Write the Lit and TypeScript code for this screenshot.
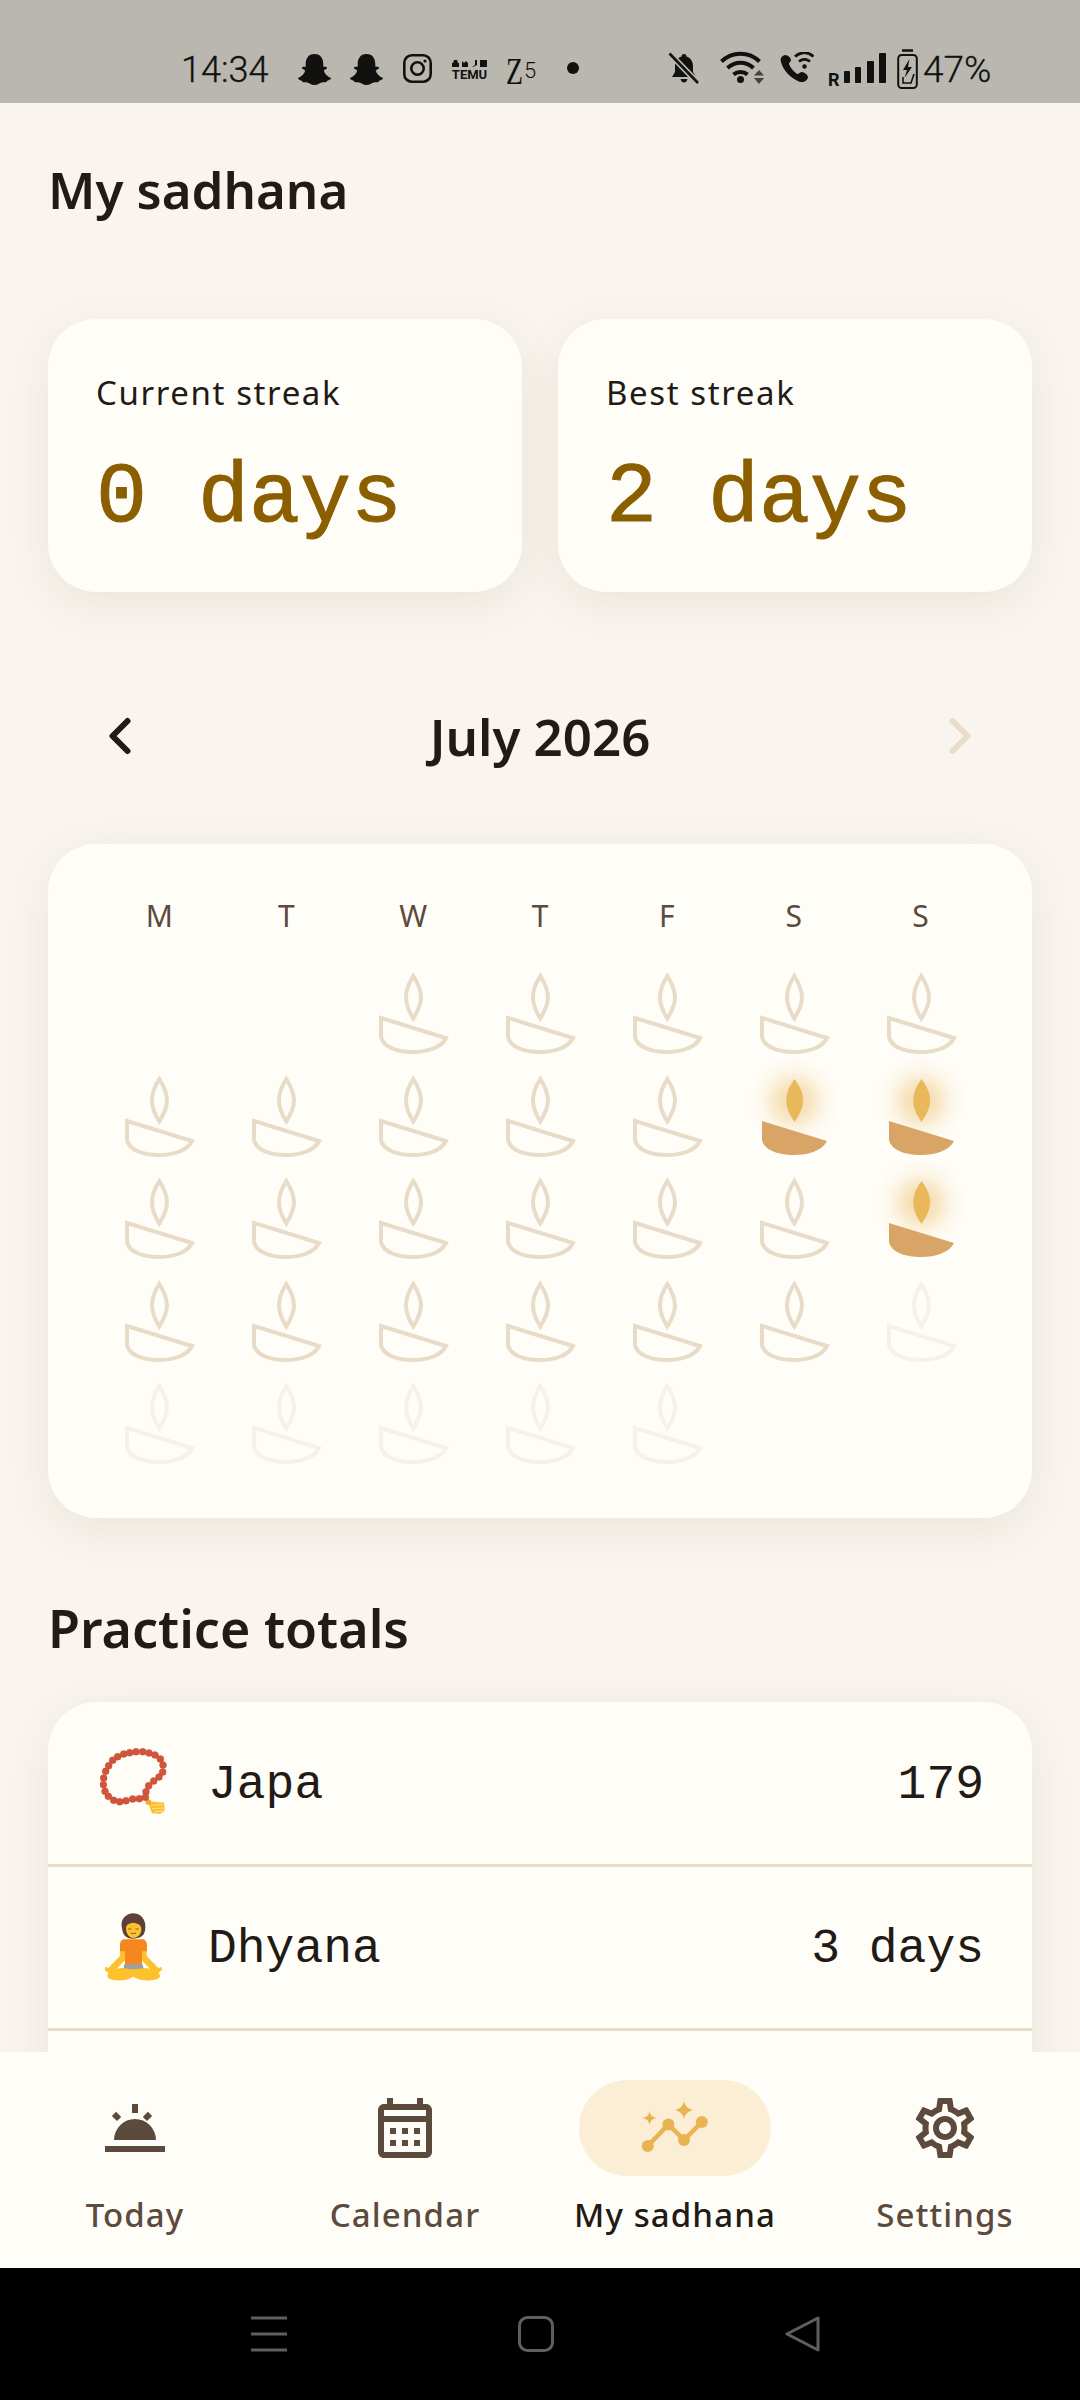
import { LitElement, html, css, svg } from "lit";
import { customElement } from "lit/decorators.js";

const FLAME = "M38.3 4C33.5 11.5 31 18 31 25.5C31 33 34 39.5 38.3 46.5C42.6 39.5 46 33 46 25.5C46 18 43 11.5 38.3 4Z";
const FLAME_LIT = "M38.5 4C33 11.5 30.3 18 30.3 25.5C30.3 33 33.5 39.5 38.5 47C43.5 39.5 47 33 47 25.5C47 18 44 11.5 38.5 4Z";
const BOWL = "M6 46L71 66C66 76 52 80 38 80C22 80 8 75 6 65Z";

type L = 0 | 1 | 2 | 3; // blank, outline, lit, faded
const ROWS: L[][] = [
  [0, 0, 1, 1, 1, 1, 1],
  [1, 1, 1, 1, 1, 2, 2],
  [1, 1, 1, 1, 1, 1, 2],
  [1, 1, 1, 1, 1, 1, 3],
  [3, 3, 3, 3, 3, 0, 0],
];

const BEADS = [[131,240],[137,220],[146,203],[158,187],[173,176],[191,168],[209,164],[228,161],[248,161],[267,165],[285,171],[301,183],[309,201],[308,222],[297,237],[281,249],[266,263],[258,281],[256,298],[238,302],[218,303],[198,308],[179,311],[161,307],[145,295],[135,280],[130,260]];

@customElement("app-root")
export class AppRoot extends LitElement {
  static styles = css`
    :host { display: block; width: 1080px; height: 2400px; overflow: hidden; background: #f9f5ee; font-family: "Noto Sans", sans-serif; color: #211a15; }
    .screen { display: flex; flex-direction: column; height: 2400px; }
    .status { height: 103px; flex: none; background: #bab7b0; display: flex; align-items: flex-start; padding-left: 181px; color: #11110f; box-sizing: border-box; }
    .status > * { flex: none; }
    .time { font: 300 36px/1 Roboto, sans-serif; margin-top: 52px; width: 87px; -webkit-text-stroke: 0.3px #11110f; }
    .ghost1 { margin: 54px 0 0 30px; }
    .ghost2 { margin: 54px 0 0 19px; }
    .insta { margin: 54px 0 0 20px; }
    .temu { margin: 60px 0 0 20px; width: 35px; display: flex; flex-direction: column; align-items: center; }
    .temu b { font: 700 13px/1 Roboto, sans-serif; margin-top: 1px; }
    .z5 { margin: 53px 0 0 19px; width: 31px; display: flex; align-items: flex-start; }
    .z5 span { font: 400 37px/1 "Liberation Serif", serif; display: block; width: 17px; transform: scaleX(0.75); transform-origin: left top; }
    .z5 small { font: 300 22px/1 Roboto, sans-serif; margin-top: 7px; margin-left: 1px; }
    .dot { margin: 62px 0 0 30px; width: 12px; height: 12px; border-radius: 50%; background: #11110f; }
    .bell { margin: 52px 0 0 89px; }
    .wifi { margin: 51px 0 0 20px; }
    .call { margin: 52px 0 0 15px; }
    .r { margin: 71px 0 0 14px; font: 700 18px/1 Roboto, sans-serif; width: 12px; }
    .bars { margin: 53px 0 0 4px; }
    .batt { margin: 49px 0 0 11px; }
    .pct { font: 300 37px/1 Roboto, sans-serif; margin: 51px 0 0 5px; -webkit-text-stroke: 0.3px #11110f; }

    .main { flex: 1; min-height: 0; overflow: hidden; padding: 52px 48px 0 48px; }
    h1 { margin: 0; font: 600 51px/68px "Noto Sans", sans-serif; }
    .streaks { display: grid; grid-template-columns: 1fr 1fr; gap: 36px; margin-top: 96px; }
    .card { background: #fffdf8; border-radius: 48px; box-shadow: 0 12px 48px rgba(90, 70, 40, 0.09); }
    .streak { height: 273px; padding: 52px 48px 0; box-sizing: border-box; }
    .streak .lbl { font: 400 33px/44px "Noto Sans", sans-serif; letter-spacing: 1.6px; }
    .streak .val { font: 400 85px/100px "Liberation Mono", monospace; color: #8b5e00; margin-top: 34px; white-space: pre; -webkit-text-stroke: 1px #8b5e00; }
    .month { display: flex; align-items: center; justify-content: space-between; padding: 0 36px; height: 72px; margin-top: 108px; }
    .month span { font: 600 51px/68px "Noto Sans", sans-serif; }
    .month svg { width: 72px; height: 72px; display: block; fill: none; stroke-width: 2; stroke-linecap: round; stroke-linejoin: round; }
    .prev { stroke: #211a15; }
    .next { stroke: #e8dcc8; }
    .cal { margin-top: 72px; padding: 50px 48px 48px; }
    .grid { display: grid; grid-template-columns: repeat(7, 1fr); }
    .hd { font: 400 30px/44px "Noto Sans", sans-serif; text-align: center; color: #5c4a3d; }
    .weeks { display: grid; grid-template-columns: repeat(7, 1fr); grid-auto-rows: 88px; row-gap: 14.5px; margin-top: 34px; }
    .cell { display: flex; justify-content: center; position: relative; }
    .lamp { width: 76px; height: 88px; display: block; position: relative; fill: none; stroke: #e8dcc8; stroke-width: 4; }
    .faded { opacity: 0.32; }
    .lit { stroke: none; }
    .lit .flame { fill: #e8b85a; }
    .lit .bowl { fill: #d9a566; }
    .glow { position: absolute; left: 50%; top: -20px; width: 92px; height: 92px; margin-left: -46px; border-radius: 50%; background: radial-gradient(circle closest-side, rgba(232, 184, 90, 0.55) 0%, rgba(232, 184, 90, 0.34) 35%, rgba(232, 184, 90, 0.08) 70%, rgba(232, 184, 90, 0) 100%); }
    h2 { margin: 76px 0 0; font: 600 52px/68px "Noto Sans", sans-serif; }
    .list { margin-top: 40px; border-radius: 48px 48px 0 0; }
    .row { height: 164.5px; box-sizing: border-box; border-bottom: 3px solid #e8dcc8; display: flex; align-items: center; padding: 0 48px 0 52px; }
    .row svg { width: 70px; height: 70px; flex: none; display: block; }
    .row .name { font: 400 48px/1 "Liberation Mono", monospace; margin: 4px 0 0 38px; flex: 1; }
    .row .num { font: 400 48px/1 "Liberation Mono", monospace; margin-top: 4px; white-space: pre; }
    .row.tail { height: 200px; border: 0; }

    .nav { height: 216px; flex: none; background: #fffdf8; display: grid; grid-template-columns: repeat(4, 270px); position: relative; }
    .tab { display: flex; flex-direction: column; align-items: center; padding-top: 28px; color: #5c4a3d; }
    .pill { width: 192px; height: 96px; border-radius: 48px; display: flex; align-items: center; justify-content: center; }
    .pill svg { width: 72px; height: 72px; display: block; fill: currentColor; }
    .tab.on .pill { background: #fbeed5; }
    .tab.on { color: #211a15; }
    .tab .t { font: 500 33px/44px "Noto Sans", sans-serif; letter-spacing: 1.1px; margin-top: 17px; }
    .sys { height: 132px; flex: none; background: #000; display: flex; align-items: center; position: relative; padding-left: 251px; box-sizing: border-box; }
    .sys svg { display: block; fill: none; stroke: #5f5f5f; stroke-width: 3; stroke-linejoin: round; }
    .sys .h { margin-left: 231px; }
    .sys .b { margin-left: 230px; }
  `;

  private ghost(cls: string) {
    return html`<svg class=${cls} width="33" height="31" viewBox="0 0 33 31" fill="#11110f"><path d="M16.5 0C23 0 25.3 5 25.3 10V12.6C26.6 13.2 28.4 12 29 13.4C29.4 15 26.3 15.4 25.8 16.6C26.6 20 29.5 22.8 33 24C33 26 29.6 26 29 27.2C28.4 28.6 26.8 28 25 28.2C22 28.6 20 31 16.5 31C13 31 11 28.6 8 28.2C6.2 28 4.6 28.6 4 27.2C3.4 26 0 26 0 24C3.5 22.8 6.4 20 7.2 16.6C6.7 15.4 3.6 15 4 13.4C4.6 12 6.4 13.2 7.7 12.6V10C7.7 5 10 0 16.5 0Z"/></svg>`;
  }

  private lamp(s: L) {
    if (s === 0) return html`<div class="cell"></div>`;
    const lit = s === 2;
    return html`<div class="cell">
      ${lit ? html`<span class="glow"></span>` : ""}
      <svg class="lamp ${lit ? "lit" : ""} ${s === 3 ? "faded" : ""}" viewBox="0 0 76 88">
        <path class="flame" d=${lit ? FLAME_LIT : FLAME} /><path class="bowl" d=${BOWL} />
      </svg>
    </div>`;
  }

  private tab(label: string, icon: unknown, on = false) {
    return html`<div class="tab ${on ? "on" : ""}"><div class="pill">${icon}</div><div class="t">${label}</div></div>`;
  }

  render() {
    const today = html`<svg viewBox="0 0 24 24"><path d="M2 18h20v2H2zM5 16a7 7 0 0 1 14 0zM11 4h2v3h-2z"/><path d="M5.3 7.4l1.4-1.4 1.7 1.7-1.4 1.4zM17.3 6l1.4 1.4-1.7 1.7-1.4-1.4z" transform="translate(-1 .6)"/></svg>`;
    const cal = html`<svg viewBox="0 0 24 24"><path d="M19 4h-1V2h-2v2H8V2H6v2H5c-1.1 0-2 .9-2 2v14c0 1.1.9 2 2 2h14c1.1 0 2-.9 2-2V6c0-1.1-.9-2-2-2zm0 16H5V10h14v10zm0-12H5V6h14v2zM7 12h2v2H7zm4 0h2v2h-2zm4 0h2v2h-2zM7 16h2v2H7zm4 0h2v2h-2zm4 0h2v2h-2z"/></svg>`;
    const gear = html`<svg viewBox="0 0 24 24"><path d="M19.43 12.98c.04-.32.07-.64.07-.98 0-.34-.03-.66-.07-.98l2.11-1.65c.19-.15.24-.42.12-.64l-2-3.46c-.09-.16-.26-.25-.44-.25-.06 0-.12.01-.17.03l-2.49 1c-.52-.4-1.08-.73-1.69-.98l-.38-2.65C14.46 2.18 14.25 2 14 2h-4c-.25 0-.46.18-.49.42l-.38 2.65c-.61.25-1.17.59-1.69.98l-2.49-1c-.06-.02-.12-.03-.18-.03-.17 0-.34.09-.43.25l-2 3.46c-.13.22-.07.49.12.64l2.11 1.65c-.04.32-.07.65-.07.98 0 .33.03.66.07.98l-2.11 1.65c-.19.15-.24.42-.12.64l2 3.46c.09.16.26.25.44.25.06 0 .12-.01.17-.03l2.49-1c.52.4 1.08.73 1.69.98l.38 2.65c.03.24.24.42.49.42h4c.25 0 .46-.18.49-.42l.38-2.65c.61-.25 1.17-.59 1.69-.98l2.49 1c.06.02.12.03.18.03.17 0 .34-.09.43-.25l2-3.46c.12-.22.07-.49-.12-.64l-2.11-1.65zm-1.98-1.71c.04.31.05.52.05.73 0 .21-.02.43-.05.73l-.14 1.13.89.7 1.08.84-.7 1.21-1.27-.51-1.04-.42-.9.68c-.43.32-.84.56-1.25.73l-1.06.43-.16 1.13-.2 1.35h-1.4l-.19-1.35-.16-1.13-1.06-.43c-.43-.18-.83-.41-1.23-.71l-.91-.7-1.06.43-1.27.51-.7-1.21 1.08-.84.89-.7-.14-1.13c-.03-.31-.05-.54-.05-.74s.02-.43.05-.73l.14-1.13-.89-.7-1.08-.84.7-1.21 1.27.51 1.04.42.9-.68c.43-.32.84-.56 1.25-.73l1.06-.43.16-1.13.2-1.35h1.39l.19 1.35.16 1.13 1.06.43c.43.18.83.41 1.23.71l.91.7 1.06-.43 1.27-.51.7 1.21-1.07.85-.89.7.14 1.13zM12 8c-2.21 0-4 1.79-4 4s1.79 4 4 4 4-1.79 4-4-1.79-4-4-4zm0 6c-1.1 0-2-.9-2-2s.9-2 2-2 2 .9 2 2-.9 2-2 2z"/></svg>`;
    const graph = html`<svg viewBox="0 0 72 72" style="color:#e8b44f">
      <path d="M8.8 54L29.4 32.5L45 48L62.8 30" fill="none" stroke="currentColor" stroke-width="4.5"/>
      <circle cx="8.8" cy="54" r="6"/><circle cx="29.4" cy="32.5" r="6"/><circle cx="45" cy="48" r="6"/><circle cx="62.8" cy="30" r="6"/>
      <path d="M45 9Q46 16 54 18Q46 20 45 27Q44 20 36 18Q44 16 45 9Z"/>
      <path d="M10.5 19Q11 25 18 26Q11 27 10.5 33Q10 27 3 26Q10 25 10.5 19Z"/>
    </svg>`;

    return html`<div class="screen">
      <div class="status">
        <span class="time">14:34</span>
        ${this.ghost("ghost1")}${this.ghost("ghost2")}
        <svg class="insta" width="29" height="29" viewBox="0 0 29 29" fill="none" stroke="#11110f" stroke-width="2.6"><rect x="1.3" y="1.3" width="26.4" height="26.4" rx="7.5"/><circle cx="14.5" cy="14.5" r="6.2"/><circle cx="22" cy="7" r="1.6" fill="#11110f" stroke="none"/></svg>
        <div class="temu">
          <svg width="35" height="7" viewBox="0 0 35 7" fill="#11110f"><path d="M2 0H5L6 3H7V7H0V3H1ZM10 1L12 3L14 1L16 3V7H10ZM20 7L23 5V0H25V5L21 7ZM28 0H35V7H28Z"/></svg>
          <b>TEMU</b>
        </div>
        <div class="z5"><span>Z</span><small>5</small></div>
        <span class="dot"></span>
        <svg class="bell" width="32" height="32" viewBox="0 0 32 32"><path d="M16 2C17.5 2 18.5 3 18.5 4.5C23 6 25 10 25 14V20L28 25H4L7 20V14C7 10 9 6 13.5 4.5C13.5 3 14.5 2 16 2ZM12.5 27H19.5C19 29.5 17.5 30.5 16 30.5C14.5 30.5 13 29.5 12.5 27Z" fill="#11110f"/><path d="M1.5 1.5L30 31" stroke="#bab7b0" stroke-width="6"/><path d="M1.5 1.5L30 31" stroke="#11110f" stroke-width="2.6"/></svg>
        <svg class="wifi" width="45" height="33" viewBox="0 0 45 33" fill="none" stroke="#11110f" stroke-width="4"><path d="M1.5 10.5C12 0 29 0 39.5 10.5M7.5 17C15 10 26 10 33.5 17M13.5 23.5C17.5 20 23.5 20 27.5 23.5"/><circle cx="20.5" cy="28.5" r="3.5" fill="#11110f" stroke="none"/><path d="M34 24.5L39 19L44 24.5ZM34 27H44L39 33Z" fill="#11110f" stroke="none" opacity=".7"/></svg>
        <svg class="call" width="34" height="30" viewBox="0 0 34 30" fill="none" stroke="#11110f"><path d="M5 3C1 4 0 7 1 10C3 18 10 26 20 30C24 31 28 28 28 25C28 23 24 20 22 20C20 20 19 22 17 22C13 19 10 15 9 12C9 10 11 10 11 8C11 6 8 3 5 3Z" fill="#11110f" stroke="none"/><path d="M15 4.5C21 -0.5 28 -0.5 33.5 4.5M19 9.5C23 6.5 26 6.5 30 9.5" stroke-width="2.8"/><circle cx="24.5" cy="14.5" r="2.2" fill="#11110f" stroke="none"/></svg>
        <span class="r">R</span>
        <svg class="bars" width="42" height="30" viewBox="0 0 42 30" fill="#11110f"><rect x="0" y="18" width="6" height="12" rx=".8"/><rect x="11" y="14" width="6" height="16" rx=".8"/><rect x="23" y="8" width="7" height="22" rx=".8"/><rect x="35" y="0" width="7" height="30" rx=".8"/></svg>
        <svg class="batt" width="21" height="40" viewBox="0 0 21 40" fill="none" stroke="#11110f" stroke-width="2"><path d="M5 1.5H16" stroke-width="2.5"/><rect x="1.2" y="6" width="18.6" height="33" rx="3.5"/><path d="M12.5 10L6 21H10L7.5 29L15 18H11Z" fill="#11110f" stroke="none"/><path d="M6 28V34H14L17 25" stroke-width="1.6"/></svg>
        <span class="pct">47%</span>
      </div>

      <div class="main">
        <h1>My sadhana</h1>
        <div class="streaks">
          <div class="card streak"><div class="lbl">Current streak</div><div class="val">0 days</div></div>
          <div class="card streak"><div class="lbl">Best streak</div><div class="val">2 days</div></div>
        </div>
        <div class="month">
          <svg class="prev" viewBox="0 0 24 24"><path d="M14.5 7L9.5 12L14.5 17"/></svg>
          <span>July 2026</span>
          <svg class="next" viewBox="0 0 24 24"><path d="M9.5 7L14.5 12L9.5 17"/></svg>
        </div>
        <div class="card cal">
          <div class="grid">${["M","T","W","T","F","S","S"].map((d) => html`<div class="hd">${d}</div>`)}</div>
          <div class="weeks">${ROWS.flat().map((s) => this.lamp(s))}</div>
        </div>
        <h2>Practice totals</h2>
        <div class="card list">
          <div class="row">
            <svg viewBox="120 150 210 210">
              <path d="M262 310L312 314L314 338L300 348L276 346Z" fill="#fbc02d"/>
              <path d="M272 322L308 320M276 332L310 330M284 342L312 338" stroke="#fff3c4" stroke-width="2" fill="none"/>
              <circle cx="265" cy="312" r="8.5" fill="#f9a825"/>
              ${BEADS.map(([x, y]) => svg`<circle cx=${x} cy=${y} r="10.5" fill="#d2553b" stroke="#b5452f" stroke-width="1"/>`)}
            </svg>
            <span class="name">Japa</span><span class="num">179</span>
          </div>
          <div class="row">
            <svg viewBox="60 40 210 210">
              <path d="M120 140V172L85 208L76 204L74 214L86 224L108 212L138 182V150ZM200 140V172L235 208L244 204L246 214L234 224L212 212L182 182V150Z" fill="#fdc22b"/>
              <path d="M134 122H186C196 122 201 130 201 140V158H186V196H135V158H120V140C120 130 124 122 134 122Z" fill="#f7861e"/>
              <path d="M133 196H187L192 214H130Z" fill="#9e9e9e"/>
              <path d="M82 232C82 220 100 212 122 208L160 212L198 208C220 212 240 220 240 232C240 242 220 246 196 245C180 244 170 240 160 234C150 240 140 244 124 245C100 246 82 242 82 232Z" fill="#fdc22b"/>
              <path d="M126 88C120 66 134 46 158 44C182 44 198 62 196 88C194 110 186 118 160 120C136 120 128 108 126 88Z" fill="#5d4037"/>
              <path d="M138 88C138 78 146 74 160 72C174 74 184 78 184 92C184 108 172 118 160 118C148 118 138 106 138 88Z" fill="#fdc22b"/>
              <path d="M144 91h10M166 91h10M152 103q8 5 16 0" stroke="#6d4c41" stroke-width="2.5" fill="none"/>
            </svg>
            <span class="name">Dhyana</span><span class="num">3 days</span>
          </div>
          <div class="row tail"></div>
        </div>
      </div>

      <div class="nav">
        ${this.tab("Today", today)}${this.tab("Calendar", cal)}${this.tab("My sadhana", graph, true)}${this.tab("Settings", gear)}
      </div>
      <div class="sys">
        <svg width="36" height="36" viewBox="0 0 36 36"><path d="M0 2H36M0 18H36M0 34H36" /></svg>
        <svg class="h" width="37" height="36" viewBox="0 0 37 36"><rect x="1.5" y="1.5" width="33" height="33" rx="8"/></svg>
        <svg class="b" width="36" height="36" viewBox="0 0 36 36"><path d="M2 18L33 2V34Z"/></svg>
      </div>
    </div>`;
  }
}
